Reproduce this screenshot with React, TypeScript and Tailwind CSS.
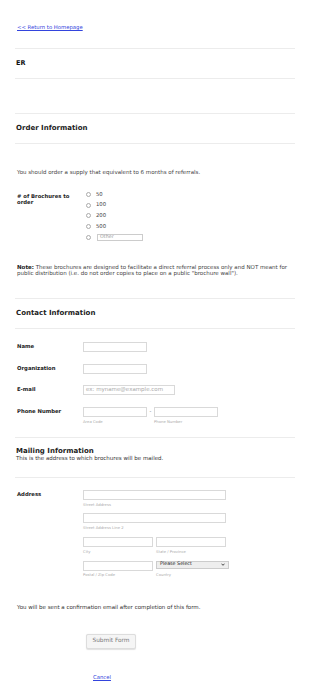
import React from "react";

const Hr = ({ className = "" }: { className?: string }) => (
  <div className={`h-px bg-[#ececec] ${className}`} />
);

const Input = ({ w, placeholder }: { w: string; placeholder?: string }) => (
  <div className={`${w} h-[10px] border border-[#d9d9d9] bg-white flex items-center pl-[2px] text-[5.5px] text-[#aaa] leading-none whitespace-nowrap overflow-hidden`}>
    {placeholder}
  </div>
);

const Sub = ({ children, w }: { children: React.ReactNode; w: string }) => (
  <div className={`${w} mt-[2px] h-[5px] text-[3.8px] leading-[5px] text-[#aaa] whitespace-nowrap`}>{children}</div>
);

const Radio = ({ label, other }: { label?: string; other?: boolean }) => (
  <div className="h-[10.75px] flex items-center">
    <div className="ml-[3px] w-[5px] h-[5px] rounded-full border-[0.5px] border-[#aaa] bg-white" />
    {other ? (
      <div className="ml-[6px] w-[46px] h-[7px] border-[0.5px] border-[#ccc] flex items-center pl-[2px] text-[4.8px] text-[#999] leading-none">
        Other
      </div>
    ) : (
      <span className="ml-[5px] text-[5.3px] leading-none text-[#444]">{label}</span>
    )}
  </div>
);

const Label = ({ children }: { children: React.ReactNode }) => (
  <div className="w-[66px] h-[10px] flex items-center text-[5.3px] font-bold text-[#222] leading-none whitespace-nowrap">
    {children}
  </div>
);

export default function App() {
  return (
    <div
      className="w-[310px] h-[692px] bg-white px-[15px] overflow-hidden text-[#333]"
      style={{ fontFamily: '"DejaVu Sans", Verdana, sans-serif' }}
    >
      <div className="pt-[24px] pl-[2px] h-[30px]">
        <a href="#" className="block h-[6px] text-[5.3px] leading-[6px] text-[#3344dd] underline">
          &lt;&lt; Return to Homepage
        </a>
      </div>
      <Hr className="mt-[18px]" />
      <div className="h-[29px] flex items-center pl-[1px] text-[6.5px] font-bold text-[#111]">ER</div>
      <Hr />
      <div className="h-[34px]" />
      <Hr />
      <div className="h-[29px] flex items-center pl-[1px] text-[7px] font-bold text-[#222]">
        Order Information
      </div>
      <Hr />
      <div className="mt-[25px] pl-[2px] h-[6px] text-[5.5px] leading-[6px] text-[#444] whitespace-nowrap">
        You should order a supply that equivalent to 6 months of referrals.
      </div>
      <div className="mt-[14px] pl-[2px] flex">
        <div className="w-[66px] pt-[4px]">
          <div className="w-[60px] text-[5.3px] leading-[6px] font-bold text-[#222]">
            # of Brochures to order
          </div>
        </div>
        <div className="flex flex-col">
          <Radio label="50" />
          <Radio label="100" />
          <Radio label="200" />
          <Radio label="500" />
          <Radio other />
        </div>
      </div>
      <div className="mt-[21px] pl-[2px] text-[5.5px] leading-[6px] text-[#444]">
        <div className="whitespace-nowrap">
          <span className="font-bold text-[#222]">Note:</span> These brochures are designed to facilitate a direct referral process only and NOT meant for
        </div>
        <div className="whitespace-nowrap">
          public distribution (i.e. do not order copies to place on a public "brochure wall").
        </div>
      </div>
      <Hr className="mt-[22px]" />
      <div className="h-[29px] flex items-center pl-[1px] text-[7px] font-bold text-[#222]">
        Contact Information
      </div>
      <Hr />
      <div className="mt-[13px] pl-[2px] flex items-center">
        <Label>Name</Label>
        <Input w="w-[64px]" />
      </div>
      <div className="mt-[12px] pl-[2px] flex items-center">
        <Label>Organization</Label>
        <Input w="w-[64px]" />
      </div>
      <div className="mt-[11px] pl-[2px] flex items-center">
        <Label>E-mail</Label>
        <Input w="w-[92px]" placeholder="ex: myname@example.com" />
      </div>
      <div className="mt-[12px] pl-[2px] flex items-start">
        <Label>Phone Number</Label>
        <div className="flex flex-col">
          <Input w="w-[64px]" />
          <Sub w="w-[64px]">Area Code</Sub>
        </div>
        <div className="w-[7px] h-[10px] flex items-center justify-center text-[5px] text-[#666] leading-none">-</div>
        <div className="flex flex-col">
          <Input w="w-[64px]" />
          <Sub w="w-[64px]">Phone Number</Sub>
        </div>
      </div>
      <Hr className="mt-[13px]" />
      <div className="mt-[10px] pl-[1px] h-[7px] text-[7px] leading-[7px] font-bold text-[#222]">
        Mailing Information
      </div>
      <div className="pl-[1px] h-[6px] text-[5.5px] leading-[6px] text-[#333] whitespace-nowrap">
        This is the address to which brochures will be mailed.
      </div>
      <Hr className="mt-[16px]" />
      <div className="mt-[12px] pl-[2px] flex items-start">
        <Label>Address</Label>
        <div className="flex flex-col">
          <Input w="w-[143px]" />
          <Sub w="w-[143px]">Street Address</Sub>
          <div className="mt-[6px]">
            <Input w="w-[143px]" />
          </div>
          <Sub w="w-[143px]">Street Address Line 2</Sub>
          <div className="mt-[7px] flex gap-[3px]">
            <div className="flex flex-col">
              <Input w="w-[70px]" />
              <Sub w="w-[70px]">City</Sub>
            </div>
            <div className="flex flex-col">
              <Input w="w-[70px]" />
              <Sub w="w-[70px]">State / Province</Sub>
            </div>
          </div>
          <div className="mt-[7px] flex gap-[3px]">
            <div className="flex flex-col">
              <Input w="w-[70px]" />
              <div className="w-[70px] mt-[1px] h-[5px] text-[3.8px] leading-[5px] text-[#aaa]">Postal / Zip Code</div>
            </div>
            <div className="flex flex-col">
              <div className="h-[10px]">
                <div className="w-[73px] h-[8px] border-[0.5px] border-[#ccc] bg-[#eeeeee] flex items-center justify-between px-[3px] text-[4.8px] leading-none text-[#222]">
                  <span>Please Select</span>
                  <svg width="4" height="3" viewBox="0 0 4 3">
                    <path d="M0.5 0.7 L2 2.3 L3.5 0.7" fill="none" stroke="#222" strokeWidth="0.8" />
                  </svg>
                </div>
              </div>
              <div className="w-[73px] mt-[1px] h-[5px] text-[3.8px] leading-[5px] text-[#aaa]">Country</div>
            </div>
          </div>
        </div>
      </div>
      <div className="mt-[27px] pl-[2px] h-[6px] text-[5.5px] leading-[6px] text-[#333] whitespace-nowrap">
        You will be sent a confirmation email after completion of this form.
      </div>
      <div className="mt-[24px] ml-[71px] w-[50px] h-[15px] rounded-[2px] border-[0.5px] border-[#ddd] bg-[#f5f5f5] shadow-[0_0.5px_1px_rgba(0,0,0,0.12)] flex items-center justify-center text-[5.8px] leading-none text-[#777]">
        Submit Form
      </div>
      <div className="mt-[25px] ml-[78px] h-[6px]">
        <a href="#" className="block text-[5.3px] leading-[6px] text-[#3344dd] underline">Cancel</a>
      </div>
    </div>
  );
}
